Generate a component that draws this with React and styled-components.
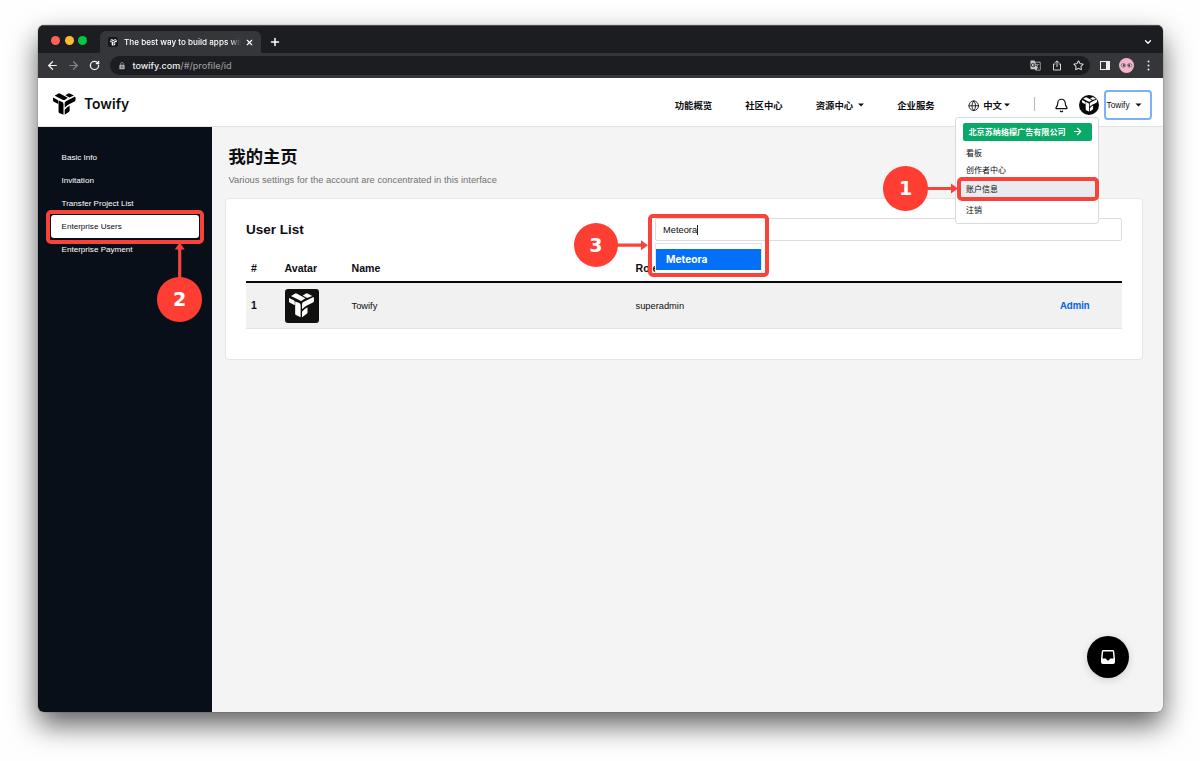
import { ArrowLeft, ArrowRight, Bell, ChevronDown, Globe, Plus, RotateCw, Star, X } from "lucide-react";
import { MdGTranslate, MdLock } from "react-icons/md";
import styled, { createGlobalStyle } from "styled-components";

const navs = [
  { name: "功能概览" },
  { name: "社区中心" },
  { name: "资源中心", caret: true },
  { name: "企业服务" },
];
const sideMenus = ["Basic Info", "Invitation", "Transfer Project List", "Enterprise Users", "Enterprise Payment"];
const users = [{ id: 1, name: "Towify", role: "superadmin" }];

const Logo = ({ size, color = "#000" }) => (
  <svg width={size} height={size} viewBox="0 0 73 72" fill={color}>
    <path d="M6 8 18 1Q20 0 22 1L48 15 39 21Q35 24 31 21L7 9Z" />
    <path d="M0 14 14 21Q17 23 17 27L17 35 3 28Q0 27 0 24Z" />
    <path d="M18 24 30 29Q34 31 34 36L34 70 20 64Q18 63 18 60Z" />
    <path d="M40 7 50 1Q52 0 54 1L68 8 53 14Z" />
    <path d="M42 26 70 12Q73 11 73 14L73 22Q73 25 70 27L52 36Q44 40 38 47L38 32Q38 28 42 26Z" />
    <path d="M38 54Q44 46 54 41L54 56Q54 59 51 61L38 70Z" />
  </svg>
);

const Caret = ({ size = 6 }) => (
  <svg width={size} height="4" viewBox="0 0 6 4"><path d="M0 .4h6L3 3.6z" fill="#111" /></svg>
);

const BrowserBar = () => (
  <>
    <TabBar>
      <Lights>
        <Light $color="#ff5f57" />
        <Light $color="#febc2e" />
        <Light $color="#00c840" />
      </Lights>
      <Tab>
        <Favicon><Logo size={7} color="#fff" /></Favicon>
        <TabTitle>The best way to build apps with</TabTitle>
        <X size={9} strokeWidth={3} />
      </Tab>
      <Plus size={12} strokeWidth={3} />
      <Spacer />
      <ChevronDown size={10} strokeWidth={3} />
    </TabBar>
    <ToolBar>
      <ArrowLeft size={13} strokeWidth={2.3} />
      <ArrowRight size={13} strokeWidth={2.2} color="#85868a" />
      <RotateCw size={11} strokeWidth={2.8} />
      <Omnibox>
        <MdLock size={8} color="#a5a6a9" />
        <Url>towify.com<span>/#/profile/id</span></Url>
        <Spacer />
        <MdGTranslate size={11} color="#c8c9cb" />
        <svg width="10" height="11" viewBox="0 0 10 11" fill="none" stroke="#d5d5d7" strokeWidth="1">
          <path d="M3.3 4H1.5v6h7V4H6.7M5 7V1M3 2.8 5 .8l2 2" />
        </svg>
        <Star size={11} strokeWidth={2.3} color="#d5d5d7" />
      </Omnibox>
      <SidePanel />
      <Profile>
        <svg width="15" height="15" viewBox="0 0 15 15">
          <g fill="#fff" stroke="#5d3a48" strokeWidth=".7">
            <ellipse cx="4.4" cy="7.4" rx="2.2" ry="1.7" />
            <ellipse cx="10.6" cy="7.4" rx="2.2" ry="1.7" />
          </g>
          <circle cx="4.8" cy="7.4" r="1.1" fill="#3d2530" />
          <circle cx="10.2" cy="7.4" r="1.1" fill="#3d2530" />
        </svg>
      </Profile>
      <svg width="3" height="11" viewBox="0 0 3 11" fill="#e8e8ea">
        <circle cx="1.5" cy="1.5" r="1" /><circle cx="1.5" cy="5.5" r="1" /><circle cx="1.5" cy="9.5" r="1" />
      </svg>
    </ToolBar>
  </>
);

const AccountMenu = () => (
  <MenuDiv>
    <Company>北京苏纳络檬广告有限公司 <ArrowRight size={11} strokeWidth={2.6} /></Company>
    <MenuItem>看板</MenuItem>
    <MenuItem>创作者中心</MenuItem>
    <MenuItem $active>账户信息</MenuItem>
    <MenuItem $last>注销</MenuItem>
  </MenuDiv>
);

const Header = () => (
  <HeaderDiv>
    <BrandDiv>
      <Logo size={22.5} />
      <Brand>Towify</Brand>
    </BrandDiv>
    <Spacer />
    <Nav>
      {navs.map((nav) => (
        <NavItem key={nav.name}>{nav.name}{nav.caret && <Caret />}</NavItem>
      ))}
      <Lang><Globe size={11.5} strokeWidth={1.8} /><b>中文</b><Caret /></Lang>
    </Nav>
    <Divider />
    <BellIcon size={15} strokeWidth={1.9} />
    <RoundAvatar><Logo size={15} color="#fff" /></RoundAvatar>
    <Account>Towify<Caret size={7} /></Account>
    <AccountMenu />
  </HeaderDiv>
);

const UserCard = () => (
  <Card>
    <CardHead>
      <CardTitle>User List</CardTitle>
      <SearchDiv>
        <SearchInput>Meteora<Cursor /></SearchInput>
        <Suggest><Option>Meteora</Option></Suggest>
      </SearchDiv>
    </CardHead>
    <HeadRow>
      <span>#</span>
      <span>Avatar</span>
      <span>Name</span>
      <span>Role</span>
    </HeadRow>
    {users.map((user) => (
      <Row key={user.id}>
        <RowNo>{user.id}</RowNo>
        <SquareAvatar><Logo size={25} color="#fff" /></SquareAvatar>
        <span>{user.name}</span>
        <span>{user.role}</span>
        <AdminLink>Admin</AdminLink>
      </Row>
    ))}
  </Card>
);

// numbered guide marks drawn over the window
const Guides = () => (
  <>
    <Outline $x={957} $y={177} $w={142} $h={23.5} />
    <Outline $x={46} $y={209.5} $w={157.5} $h={34} />
    <Outline $x={648} $y={213.5} $w={121} $h={63.5} />
    <Arrows width="1200" height="761" viewBox="0 0 1200 761">
      <path d="M925 188.5h28M616 245.2h28M179.7 280v-32" stroke="#f8423a" strokeWidth="3.2" />
      <path d="M951 183.5v10l7-5zM641 240.2v10l7-5zM174.7 249.5h10l-5-7z" fill="#f8423a" />
    </Arrows>
    <Step $x={905.7} $y={188.5}>1</Step>
    <Step $x={179.7} $y={299.5}>2</Step>
    <Step $x={595.8} $y={245.2}>3</Step>
  </>
);

const App = () => (
  <Page>
    <GlobalStyle />
    <Window>
      <BrowserBar />
      <Header />
      <Body>
        <Side>
          {sideMenus.map((menu) => (
            <SideItem key={menu} $active={menu === "Enterprise Users"}>{menu}</SideItem>
          ))}
        </Side>
        <Main>
          <Title>我的主页</Title>
          <Desc>Various settings for the account are concentrated in this interface</Desc>
          <UserCard />
        </Main>
      </Body>
      <Chat>
        <svg width="14" height="14" viewBox="0 0 14 14">
          <path fillRule="evenodd" fill="#fff" d="M2.3 0h9.4q1.3 0 1.5 1.3L14 8.4V12q0 2-2 2H2q-2 0-2-2V8.4L.8 1.3Q1 0 2.3 0ZM2.2 1.5 1.5 8.6h3.1q.7 0 .9.8.3 1 1.5 1t1.5-1q.2-.8.9-.8h3.1l-.7-7.1Z" />
        </svg>
      </Chat>
    </Window>
    <Guides />
  </Page>
);

export default App;

const GlobalStyle = createGlobalStyle`
  * {
    box-sizing: border-box;
  }
  body {
    margin: 0;
    background-color: #fefefe;
    font-family: "Liberation Sans", "Noto Sans CJK SC", sans-serif;
    color: #0c0d10;
  }
  svg {
    flex-shrink: 0;
    display: block;
  }
`;
const Page = styled.div`
  position: relative;
  width: 1200px;
  height: 761px;
  padding: 25px 37.5px 49px;
  overflow: hidden;
`;
const Window = styled.div`
  position: relative;
  height: 687px;
  display: flex;
  flex-direction: column;
  border-radius: 6px;
  overflow: hidden;
  background-color: #f4f4f4;
  box-shadow: 0 13px 28px rgba(0, 0, 0, 0.62), 0 0 1px rgba(0, 0, 0, 0.8);
`;
const Spacer = styled.div`
  flex: 1;
`;
const TabBar = styled.div`
  height: 28px;
  display: flex;
  align-items: center;
  padding: 5px 10px 0 13.5px;
  background-color: #1c1d20;
  border-top: 1px solid #4b4c4f;
  color: #fff;
  font-family: Inter, sans-serif;
`;
const Lights = styled.div`
  display: flex;
  gap: 4.5px;
  margin: -4px 13px 0 0;
`;
const Light = styled.div`
  width: 9px;
  height: 9px;
  border-radius: 50%;
  background-color: ${({ $color }) => $color};
`;
const Tab = styled.div`
  width: 161px;
  height: 22px;
  display: flex;
  align-items: center;
  padding: 0 7px 0 8px;
  margin-right: 8px;
  border-radius: 6px 6px 0 0;
  background-color: #35363a;
`;
const Favicon = styled.div`
  width: 10px;
  height: 10px;
  display: flex;
  align-items: center;
  justify-content: center;
  border-radius: 2px;
  background-color: #16171a;
`;
const TabTitle = styled.div`
  width: 117px;
  margin: 0 4px 0 6px;
  white-space: nowrap;
  font-size: 8.15px;
  font-weight: 500;
  mask-image: linear-gradient(90deg, #000 90%, transparent);
`;
const ToolBar = styled.div`
  height: 25px;
  display: flex;
  align-items: center;
  padding: 0 13px 0 8.5px;
  background-color: #35363a;
  color: #f1f1f2;
  font-family: Inter, sans-serif;
  & > svg:nth-child(2) {
    margin: 0 9px 0 8px;
  }
`;
const Omnibox = styled.div`
  flex: 1;
  height: 19px;
  display: flex;
  align-items: center;
  padding: 0 6px 0 8px;
  margin: 0 10px 0 9.5px;
  gap: 11px;
  border-radius: 10px;
  background-color: #1c1d20;
`;
const Url = styled.div`
  margin-left: -4px;
  font-size: 9.05px;
  font-weight: 500;
  span {
    color: #96979a;
  }
`;
const SidePanel = styled.div`
  width: 10px;
  height: 9px;
  border: 1.5px solid #f1f1f2;
  border-right-width: 4px;
`;
const Profile = styled.div`
  width: 15px;
  height: 15px;
  margin: 0 13px 0 9px;
  border-radius: 50%;
  background-color: #f3b5cd;
`;
const HeaderDiv = styled.div`
  position: relative;
  z-index: 2;
  height: 48.5px;
  display: flex;
  align-items: center;
  padding: 6px 11px 0 15.5px;
  flex-shrink: 0;
  background-color: #fff;
  border-bottom: 1px solid #e4e4e4;
`;
const BrandDiv = styled.div`
  display: flex;
  align-items: center;
  margin-top: -2px;
`;
const Brand = styled.div`
  margin-left: 8.5px;
  font-family: Inter, sans-serif;
  font-size: 13.9px;
  font-weight: 600;
`;
const Nav = styled.div`
  display: flex;
  align-items: center;
  gap: 33px;
  font-size: 9.4px;
`;
const NavItem = styled.div`
  display: flex;
  align-items: center;
  gap: 5px;
  font-weight: 700;
`;
const Lang = styled.div`
  display: flex;
  align-items: center;
  gap: 2px;
  svg:first-child {
    margin: 1px 2px 0 0;
  }
`;
const Divider = styled.div`
  width: 1px;
  height: 14px;
  margin: -2px 19px 0 23.5px;
  background-color: #b5b5b5;
`;
const BellIcon = styled(Bell)`
  margin-top: 1px;
`;
const RoundAvatar = styled.div`
  width: 20px;
  height: 20px;
  display: flex;
  align-items: center;
  justify-content: center;
  margin: 0 4.5px 0 10.5px;
  border-radius: 50%;
  background-color: #080808;
`;
const Account = styled.div`
  width: 48px;
  height: 30px;
  display: flex;
  align-items: center;
  justify-content: space-between;
  padding: 0 8px 0 1px;
  border: 2px solid #7db1f7;
  border-radius: 4px;
  font-size: 8.3px;
`;
const MenuDiv = styled.div`
  position: absolute;
  top: 39px;
  right: 63.5px;
  width: 144px;
  height: 107px;
  padding: 4.5px 6.5px;
  border: 1px solid #d9dadb;
  border-radius: 3px;
  background-color: #fff;
  font-size: 8px;
`;
const Company = styled.div`
  height: 18.5px;
  display: flex;
  align-items: center;
  justify-content: space-between;
  padding: 0 9px 0 6px;
  margin-bottom: 3px;
  border-radius: 2px;
  background-color: #0aa968;
  color: #fff;
  font-size: 8.1px;
  font-weight: 700;
`;
const MenuItem = styled.div`
  height: ${({ $active }) => ($active ? "19.5px" : "17.3px")};
  display: flex;
  align-items: center;
  margin: 0 -5px;
  padding-left: 8.5px;
  margin-top: ${({ $last }) => ($last ? "2.5px" : 0)};
  background-color: ${({ $active }) => ($active ? "#e9ebee" : "transparent")};
`;
const Body = styled.div`
  flex: 1;
  display: flex;
`;
const Side = styled.div`
  width: 174px;
  padding: 20px 13px;
  background-color: #080f18;
`;
const SideItem = styled.div`
  height: 22.8px;
  display: flex;
  align-items: center;
  padding-left: 11px;
  border-radius: 3px;
  font-size: 8.1px;
  color: ${({ $active }) => ($active ? "#0c0d10" : "#fff")};
  background-color: ${({ $active }) => ($active ? "#fff" : "transparent")};
`;
const Main = styled.div`
  flex: 1;
  padding: 18px 20px 0 13.5px;
`;
const Title = styled.div`
  height: 25px;
  padding-left: 3.5px;
  font-size: 17.3px;
  line-height: 25px;
  font-weight: 700;
`;
const Desc = styled.div`
  height: 28px;
  padding-left: 3.5px;
  font-size: 9.35px;
  line-height: 20px;
  color: #727272;
`;
const Card = styled.div`
  height: 162.5px;
  padding: 19px 20px 0;
  border: 1px solid #e6e6e6;
  border-radius: 4px;
  background-color: #fff;
`;
const CardHead = styled.div`
  display: flex;
  justify-content: space-between;
`;
const CardTitle = styled.div`
  font-size: 13.5px;
  line-height: 24px;
  font-weight: 700;
`;
const SearchDiv = styled.div`
  position: relative;
  width: 467px;
`;
const SearchInput = styled.div`
  height: 23.5px;
  display: flex;
  align-items: center;
  padding: 1px 0 0 7.5px;
  border: 1px solid #dcdde0;
  border-radius: 2px;
  font-size: 9.3px;
`;
const Cursor = styled.div`
  width: 1px;
  height: 10px;
  background-color: #222;
`;
const Suggest = styled.div`
  position: absolute;
  top: 25px;
  left: 0.5px;
  width: 107px;
  height: 32px;
  padding-top: 5px;
  border: 1px solid #e5e5e5;
  background-color: #fff;
`;
const Option = styled.div`
  height: 21.5px;
  padding-left: 10px;
  background-color: #0370f7;
  color: #fff;
  font-family: Inter, sans-serif;
  font-size: 10.2px;
  line-height: 21.5px;
  font-weight: 700;
`;
const HeadRow = styled.div`
  height: 41px;
  display: grid;
  grid-template-columns: 33.5px 67px 284px 1fr auto;
  padding: 19.5px 0 0 5px;
  border-bottom: 2px solid #08090c;
  font-size: 10.6px;
  line-height: 14px;
  font-weight: 700;
`;
const Row = styled.div`
  height: 46px;
  display: grid;
  grid-template-columns: 33.5px 67px 284px 1fr auto;
  align-items: center;
  padding: 1px 32px 0 5px;
  border-bottom: 1px solid #e2e3e5;
  background-color: #f1f1f1;
  font-size: 9.3px;
`;
const RowNo = styled.b`
  font-size: 10.4px;
`;
const SquareAvatar = styled.div`
  width: 34px;
  height: 34px;
  display: flex;
  align-items: center;
  justify-content: center;
  border-radius: 3px;
  background-color: #11110f;
`;
const AdminLink = styled.div`
  color: #0868e0;
  font-family: Inter, sans-serif;
  font-size: 9.3px;
  font-weight: 700;
`;
const Chat = styled.div`
  position: absolute;
  right: 33.5px;
  bottom: 34px;
  width: 42px;
  height: 42px;
  display: flex;
  align-items: center;
  justify-content: center;
  border-radius: 50%;
  background-color: #000;
  box-shadow: 0 2px 8px rgba(0, 0, 0, 0.15);
`;
const Outline = styled.div`
  position: absolute;
  z-index: 3;
  left: ${({ $x }) => $x}px;
  top: ${({ $y }) => $y}px;
  width: ${({ $w }) => $w}px;
  height: ${({ $h }) => $h}px;
  border: 4px solid #f8423a;
  border-radius: 5px;
`;
const Arrows = styled.svg`
  position: absolute;
  z-index: 3;
  top: 0;
  left: 0;
`;
const Step = styled.div`
  position: absolute;
  z-index: 4;
  left: ${({ $x }) => $x - 22.3}px;
  top: ${({ $y }) => $y - 22.3}px;
  width: 44.6px;
  height: 44.6px;
  display: flex;
  align-items: center;
  justify-content: center;
  border-radius: 50%;
  background-color: #ff3e33;
  color: #fff;
  font-family: "DejaVu Sans", sans-serif;
  font-size: 19px;
  font-weight: 700;
`;
